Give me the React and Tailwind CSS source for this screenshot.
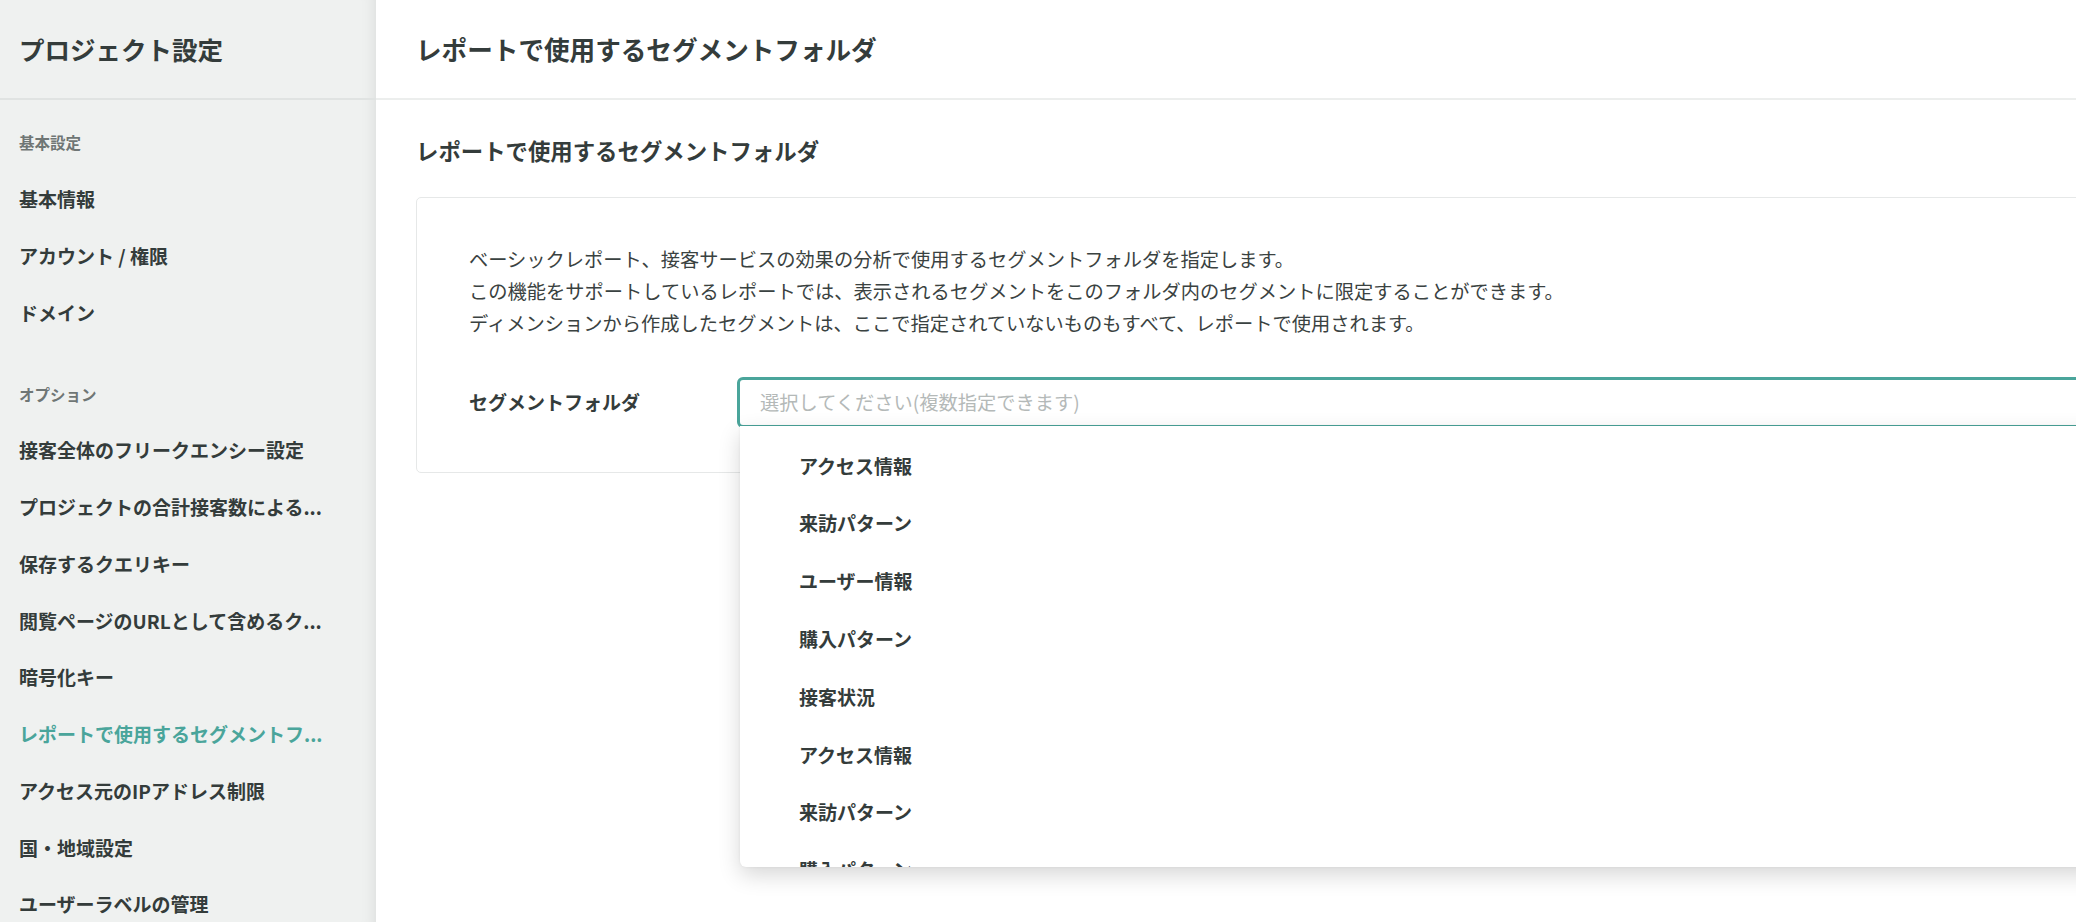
import React from "react";

const basic = ["基本情報", "アカウント / 権限", "ドメイン"];
const options = [
  "接客全体のフリークエンシー設定",
  "プロジェクトの合計接客数による...",
  "保存するクエリキー",
  "閲覧ページのURLとして含めるク...",
  "暗号化キー",
  "レポートで使用するセグメントフ...",
  "アクセス元のIPアドレス制限",
  "国・地域設定",
  "ユーザーラベルの管理",
];
const menu = [
  "アクセス情報",
  "来訪パターン",
  "ユーザー情報",
  "購入パターン",
  "接客状況",
  "アクセス情報",
  "来訪パターン",
  "購入パターン",
];

export default function App() {
  return (
    <div className="flex h-[922px] w-[2076px] overflow-hidden bg-white font-['Noto_Sans_CJK_JP','Noto_Sans',sans-serif] text-[#343c3b]">
      <aside className="flex w-[376px] shrink-0 flex-col bg-[#eff1f0] shadow-[inset_-16px_0_16px_-16px_rgba(0,0,0,0.10)]">
        <div className="flex h-[100px] shrink-0 items-center border-b-2 border-[#e0e3e2] px-[19px] text-[25.5px] font-bold">
          プロジェクト設定
        </div>
        <nav className="pt-[15px]">
          <div className="flex h-[56px] items-center px-[19px] text-[15.5px] font-bold text-[#6f7675]">
            基本設定
          </div>
          {basic.map((t) => (
            <div key={t} className="flex h-[56.75px] items-center px-[19px] text-[19px] font-bold">
              {t}
            </div>
          ))}
          <div className="mt-[26px] flex h-[55px] items-center px-[19px] text-[15.5px] font-bold text-[#6f7675]">
            オプション
          </div>
          {options.map((t) => (
            <div
              key={t}
              className={
                t.startsWith("レポート")
                  ? "flex h-[56.75px] items-center whitespace-nowrap px-[19px] text-[19px] font-bold text-[#4aa59b]"
                  : "flex h-[56.75px] items-center whitespace-nowrap px-[19px] text-[19px] font-bold"
              }
            >
              {t}
            </div>
          ))}
        </nav>
      </aside>

      <main className="flex min-w-0 flex-1 flex-col">
        <div className="flex h-[100px] shrink-0 items-center border-b-2 border-[#eceeed] px-[40px] text-[25.6px] font-bold">
          レポートで使用するセグメントフォルダ
        </div>
        <div className="pl-[40px] pt-[35px]">
          <h2 className="text-[22.4px] font-bold leading-[30px]">
            レポートで使用するセグメントフォルダ
          </h2>
          <div className="mt-[32px] w-[1800px] rounded-[5px] border border-[#e6e8e8] pb-[44px] pl-[52px] pt-[45px]">
            <div className="text-[19.25px] leading-[32px] text-[#3a4241]">
              <p>ベーシックレポート、接客サービスの効果の分析で使用するセグメントフォルダを指定します。</p>
              <p>この機能をサポートしているレポートでは、表示されるセグメントをこのフォルダ内のセグメントに限定することができます。</p>
              <p>ディメンションから作成したセグメントは、ここで指定されていないものもすべて、レポートで使用されます。</p>
            </div>
            <div className="mt-[38px] flex items-center">
              <div className="w-[268px] shrink-0 text-[19px] font-bold">セグメントフォルダ</div>
              <div className="relative flex-1">
                <div className="flex h-[51px] items-center rounded-[6px] border-[3px] border-[#4aa59b] pl-[20px] text-[19.25px] text-[#b4b9b8]">
                  選択してください(複数指定できます)
                </div>
                <div className="absolute left-[3px] right-0 top-[49px] z-10 h-[441px] overflow-hidden rounded-b-[6px] bg-white pt-[11px] shadow-[0_8px_22px_rgba(0,0,0,0.16),0_0_3px_rgba(0,0,0,0.06)]">
                  {menu.map((t, i) => (
                    <div key={i} className="flex h-[57.8px] items-center pl-[59px] text-[19px] font-bold">
                      {t}
                    </div>
                  ))}
                </div>
              </div>
            </div>
          </div>
        </div>
      </main>
    </div>
  );
}
